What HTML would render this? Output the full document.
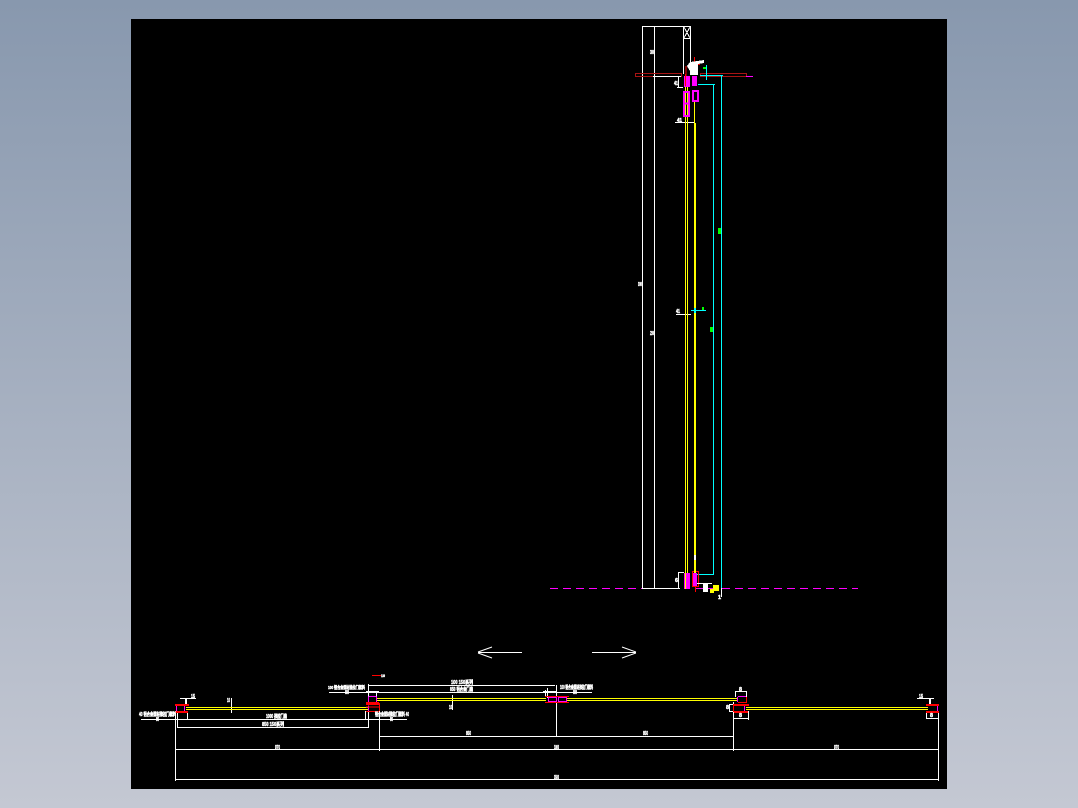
<!DOCTYPE html>
<html>
<head>
<meta charset="utf-8">
<style>
html,body{margin:0;padding:0;width:1078px;height:808px;overflow:hidden;background:linear-gradient(180deg,#8898ae 0%,#c4c8d3 100%);}
svg{position:absolute;left:0;top:0;display:block;}
text{font-family:"Liberation Sans",sans-serif;font-weight:bold;fill:#fff;stroke:#fff;stroke-width:.45;}
</style>
</head>
<body>
<svg width="1078" height="808" viewBox="0 0 1078 808" xmlns="http://www.w3.org/2000/svg">
<rect x="131" y="19" width="816" height="770" fill="#000"/>
<g fill="none" stroke-width="1" shape-rendering="crispEdges">
  <!-- vertical section -->
  <path stroke="#fff" d="M642.5 26V589M654.5 26V589M683.5 26V74M690.5 26V74M642 26.5H691M683.5 38.5H690.5M684 27L690 38M690 27L684 38"/>
  <path stroke="#a81414" d="M635.5 73.5H681.5V76.5H635.5ZM700.5 73.5H746.5V76.5H700.5Z"/>
  <path stroke="#f0f" d="M746 76.5H753"/>
  <path stroke="#fff" d="M653 76.5H681M678.5 76V87M677 87.5H683M675 122.5H695M676 314.5H691M642 588.5H680M678.5 572V588M678 572.5H684"/>
  <path stroke="#0ff" d="M700 75.5H723M721.5 75V588M713.5 84V574M698 84.5H715M697 574.5H714M691 310.5H706M706.5 65V80M695 310V313"/>
  <path stroke="#ff0" d="M685.5 85V573M687.5 85V573M694.5 100V123"/>
  <path stroke="#f0f" stroke-width="2" d="M684 92H689V116H684ZM684 103.5H689M693 91H698V101H693Z"/>
  <path stroke="#f00" d="M694.5 57V70M693 64.5H700M686 66V76M692.5 571.5H698.5V586.5H692.5ZM695.5 587V592"/>
  <path stroke="#f0f" stroke-dasharray="8 5" d="M550 588.5H642M722 588.5H858"/>
  <path stroke="#f0f" d="M696 588.5H703M708 588.5H713"/>
  <path stroke="#fff" d="M721.5 588V597M696 583.5H712"/>
  <!-- arrows -->
  <path stroke="#fff" d="M478 652.5H522M478 652L492 647M478 653L492 658M592 652.5H636M636 652L622 647M636 653L622 658" shape-rendering="auto"/>
  <!-- plan white lines -->
  <path stroke="#fff" d="M368 685.5H555M329 692.5H592M141 719.5H407M177 727.5H368M379 736.5H733M176 749.5H938M175 779.5H938"/>
  <path stroke="#fff" d="M175.5 711V781M177.5 711V728M187.5 711V720M365.5 711V720M368.5 711V728M379.5 711V751M733.5 702V751M938.5 711V781M556.5 685V737M231.5 698V713M452.5 695V710"/>
  <path stroke="#fff" d="M180 698.5H196M917 698.5H934M185.5 699V704M186.5 699V704M929.5 699V704M930.5 699V704M366 691.5H379M368.5 684V704M376.5 692V698M543 691.5H556M545.5 690V696M547.5 688V698"/>
  <path stroke="#fff" d="M735.5 691V697M746.5 691V697M735 691.5H747M733 718.5H748M748.5 711V720M926.5 711V719M926 718.5H938M729.5 704V711M729 704.5H733M729 711.5H733"/>
  <!-- yellow -->
  <path stroke="#ff0" d="M186 707.5H368M186 709.5H368M377 698.5H546M377 700.5H546M566 698.5H737M566 700.5H737M746 707.5H928M746 709.5H928"/>
  <!-- red and magenta frames -->
  <path stroke="#f0f" d="M176.5 705.5V711.5M184.5 705.5V711.5M937.5 705.5V711.5M368.5 696.5V705M376.5 696.5V703M369 696.5H376M368.5 705.5V711M744.5 705.5V711M737.5 697V702M738 696.5H746M548.5 697.5H556.5V701.5H548.5ZM558.5 697.5H566.5V701.5H558.5Z"/>
  <path stroke="#f00" d="M366 702.5H379M366 707H379M366 711.5H379M379.5 703V711M733.5 704.5V711M733 711.5H748M545 696.5H569M545 702.5H569M738 702.5H747M746.5 697V702"/>
</g>
<g shape-rendering="crispEdges">
  <!-- filled vertical section shapes -->
  <polygon points="690,62 704,60 704,63 698,64 698,75 690,75 690,71 687,66" fill="#fff"/>
  <rect x="684" y="76" width="6" height="11" fill="#f0f"/>
  <rect x="692" y="76" width="5" height="10" fill="#f0f"/>
  <rect x="685" y="74" width="1" height="12" fill="#f00"/>
  <rect x="694" y="123" width="2" height="450" fill="#ff0"/>
  <rect x="694" y="555" width="2" height="5" fill="#fff"/>
  <rect x="684" y="573" width="6" height="16" fill="#f0f"/>
  <rect x="685" y="573" width="1" height="16" fill="#ff0"/>
  <rect x="693" y="573" width="4" height="13" fill="#f0f"/>
  <rect x="703" y="583" width="5" height="9" fill="#fff"/>
  <rect x="713" y="585" width="6" height="6" fill="#ff0"/>
  <rect x="710" y="589" width="4" height="4" fill="#ff0"/>
  <rect x="703" y="67" width="3" height="2" fill="#0f0"/>
  <rect x="718" y="228" width="3" height="6" fill="#0f0"/>
  <rect x="710" y="327" width="3" height="5" fill="#0f0"/>
  <rect x="702" y="307" width="2" height="3" fill="#0f0"/>
  <rect x="694" y="308" width="2" height="5" fill="#0ff"/>
  <!-- plan red bars -->
  <rect x="175" y="704" width="14" height="2" fill="#f00"/>
  <rect x="175" y="711" width="13" height="2" fill="#f00"/>
  <rect x="926" y="704" width="13" height="2" fill="#f00"/>
  <rect x="926" y="711" width="13" height="2" fill="#f00"/>
  <rect x="366" y="703" width="14" height="2" fill="#f00"/>
  <rect x="733" y="704" width="16" height="2" fill="#f00"/>
  <rect x="734" y="711" width="14" height="2" fill="#f00"/>
  <rect x="372" y="675" width="9" height="1" fill="#f00"/>
</g>
<!-- small labels -->
<g font-size="5">
  <text x="650" y="54" textLength="4" lengthAdjust="spacingAndGlyphs">30</text>
  <text x="638" y="286" textLength="5" lengthAdjust="spacingAndGlyphs">3000</text>
  <text x="650" y="335" textLength="4" lengthAdjust="spacingAndGlyphs">20</text>
  <text x="676" y="313" textLength="4" lengthAdjust="spacingAndGlyphs">41</text>
  <text x="677" y="122" textLength="5" lengthAdjust="spacingAndGlyphs">41</text>
  <text x="674" y="85" textLength="4" lengthAdjust="spacingAndGlyphs">41</text>
  <text x="675" y="582" textLength="3" lengthAdjust="spacingAndGlyphs">6</text>
  <text x="718" y="599" textLength="3" lengthAdjust="spacingAndGlyphs">1</text>
  <text x="381" y="677" font-size="4" textLength="4" lengthAdjust="spacingAndGlyphs">10</text>
  <text x="328" y="689" font-size="4.6" textLength="37" lengthAdjust="spacingAndGlyphs">100 铝合金型材推拉门框料</text>
  <text x="345" y="694" textLength="4" lengthAdjust="spacingAndGlyphs">80</text>
  <text x="451" y="684" textLength="22" lengthAdjust="spacingAndGlyphs">100 150系列</text>
  <text x="450" y="691" textLength="23" lengthAdjust="spacingAndGlyphs">850 铝合金门扇</text>
  <text x="560" y="689" textLength="33" lengthAdjust="spacingAndGlyphs">100 铝合金型材推拉门框料</text>
  <text x="573" y="694" textLength="4" lengthAdjust="spacingAndGlyphs">80</text>
  <text x="191" y="698" textLength="4" lengthAdjust="spacingAndGlyphs">15</text>
  <text x="227" y="702" textLength="3" lengthAdjust="spacingAndGlyphs">10</text>
  <text x="449" y="709" textLength="3" lengthAdjust="spacingAndGlyphs">10</text>
  <text x="139" y="716" textLength="37" lengthAdjust="spacingAndGlyphs">40 铝合金型材推拉门框料</text>
  <text x="156" y="721" textLength="3" lengthAdjust="spacingAndGlyphs">80</text>
  <text x="266" y="718" textLength="21" lengthAdjust="spacingAndGlyphs">1000 推拉门扇</text>
  <text x="262" y="726" textLength="22" lengthAdjust="spacingAndGlyphs">850 150系列</text>
  <text x="375" y="716" textLength="34" lengthAdjust="spacingAndGlyphs">铝合金型材推拉门框料 40</text>
  <text x="390" y="721" textLength="3" lengthAdjust="spacingAndGlyphs">80</text>
  <text x="739" y="691" textLength="3" lengthAdjust="spacingAndGlyphs">8</text>
  <text x="726" y="709" textLength="3" lengthAdjust="spacingAndGlyphs">8</text>
  <text x="739" y="717" textLength="3" lengthAdjust="spacingAndGlyphs">8</text>
  <text x="919" y="698" textLength="4" lengthAdjust="spacingAndGlyphs">15</text>
  <text x="930" y="717" textLength="3" lengthAdjust="spacingAndGlyphs">8</text>
  <text x="466" y="735" textLength="5" lengthAdjust="spacingAndGlyphs">850</text>
  <text x="643" y="735" textLength="5" lengthAdjust="spacingAndGlyphs">850</text>
  <text x="275" y="749" textLength="5" lengthAdjust="spacingAndGlyphs">970</text>
  <text x="554" y="749" textLength="5" lengthAdjust="spacingAndGlyphs">1800</text>
  <text x="834" y="749" textLength="5" lengthAdjust="spacingAndGlyphs">970</text>
  <text x="554" y="779" textLength="5" lengthAdjust="spacingAndGlyphs">3500</text>
</g>
</svg>
</body>
</html>
